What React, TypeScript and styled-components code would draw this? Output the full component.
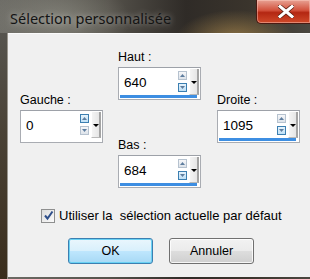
import React from 'react';
import styled, { createGlobalStyle } from 'styled-components';

const GlobalStyle = createGlobalStyle`
  html, body {
    margin: 0;
    padding: 0;
  }
  body {
    width: 310px;
    height: 279px;
    overflow: hidden;
    background: #2a241c;
  }
`;

const Window = styled.div`
  width: 310px;
  height: 279px;
  display: flex;
  flex-direction: column;
  overflow: hidden;
  background:
    radial-gradient(ellipse 60px 30px at 235px 40px, rgba(214, 170, 90, 0.55), rgba(214, 170, 90, 0) 100%),
    radial-gradient(ellipse 70px 40px at 60px 20px, rgba(150, 150, 140, 0.6), rgba(150, 150, 140, 0) 100%),
    linear-gradient(90deg, #6e6d67 0%, #55524b 35%, #2f2b27 60%, #3a342c 80%, #4a4740 100%);
  font-family: 'Liberation Sans', Arial, sans-serif;
`;

const TitleBar = styled.div`
  height: 33px;
  display: flex;
  align-items: flex-start;
`;

const Title = styled.div`
  padding: 9px 0 0 10px;
  font-family: 'Noto Sans', 'Open Sans', sans-serif;
  font-size: 14.5px;
  line-height: 18px;
  color: #141414;
  text-shadow: 0 0 6px rgba(255, 255, 255, 0.55);
`;

const CloseButton = styled.div`
  margin-left: auto;
  width: 54px;
  height: 24px;
  box-sizing: border-box;
  border: 1px solid #4a1a12;
  border-top: none;
  border-right: none;
  border-bottom-left-radius: 5px;
  background: linear-gradient(180deg, #e8a294 0%, #d2513c 45%, #b42712 55%, #cf4a2a 100%);
  box-shadow: inset 0 0 0 1px rgba(255, 210, 200, 0.45);
  display: flex;
  align-items: center;
  justify-content: center;
  padding-left: 4px;
`;

const Body = styled.div`
  flex: 1;
  display: flex;
`;

const LeftFrame = styled.div`
  width: 8px;
  background: linear-gradient(180deg, #56544e 0%, #4a4236 40%, #3a2d1c 100%);
  border-right: 1px solid #9a968e;
  box-sizing: border-box;
`;

const Client = styled.div`
  flex: 1;
  height: 244px;
  box-sizing: border-box;
  background: #f0f0f0;
  border-top: 1px solid #fbfbfb;
  display: flex;
  flex-direction: column;
`;

const Fields = styled.div`
  display: flex;
  padding-left: 12px;
  gap: 15px;
`;

const Column = styled.div<{ $top: number; $shift?: number }>`
  display: flex;
  flex-direction: column;
  width: 83px;
  padding-top: ${(p) => p.$top}px;
  margin-left: ${(p) => p.$shift ?? 0}px;
`;

const Label = styled.div<{ $gap?: number; $size?: number }>`
  font-size: ${(p) => p.$size ?? 12.5}px;
  line-height: 15px;
  color: #000;
  white-space: pre;
  margin-top: ${(p) => p.$gap ?? 0}px;
`;

const Spin = styled.div`
  margin-top: 2px;
  height: 33px;
  box-sizing: border-box;
  border: 1px solid #a9acb2;
  border-top-color: #9da1a8;
  background: #fff;
  display: flex;
  flex-direction: column;
`;

const SpinRow = styled.div`
  flex: 1;
  display: flex;
  align-items: stretch;
`;

const Value = styled.div`
  flex: 1;
  display: flex;
  align-items: center;
  padding-left: 5px;
  padding-top: 1px;
  font-size: 13.5px;
  color: #000;
`;

const Arrows = styled.div`
  width: 9px;
  display: flex;
  flex-direction: column;
  justify-content: center;
  gap: 3px;
  margin-right: 2px;
`;

const ArrowBox = styled.div<{ $hot?: boolean }>`
  width: 9px;
  height: 9px;
  box-sizing: border-box;
  border: 1px solid ${(p) => (p.$hot ? '#3c7fb1' : '#b6c2cf')};
  background: ${(p) => (p.$hot ? 'linear-gradient(180deg, #e6f3fc, #bfe0f6)' : 'linear-gradient(180deg, #f6f7f9, #dde3ea)')};
  display: flex;
  align-items: center;
  justify-content: center;
`;

const Drop = styled.div`
  width: 10px;
  margin: 1px 1px 0 0;
  box-sizing: border-box;
  border-left: 1px solid #ffffff;
  border-right: 2px solid #a4a4a4;
  border-bottom: 1px solid #b9b9b9;
  background: linear-gradient(90deg, #f4f4f4, #e6e6e6);
  display: flex;
  justify-content: center;
  padding-top: 12px;
`;

const Caret = styled.div`
  width: 0;
  height: 0;
  border-left: 3px solid transparent;
  border-right: 3px solid transparent;
  border-top: 3px solid #000;
`;

const Bar = styled.div<{ $on: boolean }>`
  height: 3px;
  margin: 0 3px 1px 1px;
  background: ${(p) => (p.$on ? '#3d8ee2' : 'transparent')};
`;

const CheckRow = styled.div`
  display: flex;
  align-items: center;
  gap: 4px;
  margin-top: 20px;
  padding-left: 33px;
`;

const CheckBox = styled.div`
  width: 14px;
  height: 14px;
  box-sizing: border-box;
  border: 1px solid #8e8f8f;
  background: linear-gradient(135deg, #dcdcdc, #fbfbfb);
  display: flex;
  align-items: center;
  justify-content: center;
`;

const Buttons = styled.div`
  display: flex;
  gap: 16px;
  margin-top: 15px;
  padding-left: 60px;
`;

const Button = styled.div<{ $primary?: boolean }>`
  width: 85px;
  height: 26px;
  box-sizing: border-box;
  border: 1px solid ${(p) => (p.$primary ? '#3c7fb1' : '#707070')};
  border-radius: 3px;
  background: ${(p) =>
    p.$primary
      ? 'linear-gradient(180deg, #eaf6fd 0%, #d9f0fc 48%, #bee6fd 52%, #a7d9f5 100%)'
      : 'linear-gradient(180deg, #f2f2f2 0%, #ebebeb 48%, #dddddd 52%, #cfcfcf 100%)'};
  box-shadow: inset 0 0 0 1px ${(p) => (p.$primary ? '#6ad2f4' : 'rgba(255,255,255,0.8)')};
  display: flex;
  align-items: center;
  justify-content: center;
  font-size: 12.5px;
  color: #000;
`;

const UpTri = () => (
  <svg width="5" height="3" viewBox="0 0 5 3">
    <polygon points="2.5,0 5,3 0,3" fill="#5e7d9e" />
  </svg>
);

const DownTri = () => (
  <svg width="5" height="3" viewBox="0 0 5 3">
    <polygon points="0,0 5,0 2.5,3" fill="#5e7d9e" />
  </svg>
);

interface SpinBoxProps {
  value: string;
  focused?: boolean;
  hot: 'up' | 'down';
}

const SpinBox = ({ value, focused, hot }: SpinBoxProps) => (
  <Spin>
    <SpinRow>
      <Value>{value}</Value>
      <Arrows>
        <ArrowBox $hot={hot === 'up'}><UpTri /></ArrowBox>
        <ArrowBox $hot={hot === 'down'}><DownTri /></ArrowBox>
      </Arrows>
      <Drop><Caret /></Drop>
    </SpinRow>
    <Bar $on={!!focused} />
  </Spin>
);

const App = () => (
  <Window>
    <GlobalStyle />
    <TitleBar>
      <Title>Sélection personnalisée</Title>
      <CloseButton>
        <svg width="16" height="13" viewBox="0 0 16 13">
          <path d="M2 1.5 L14 11.5 M14 1.5 L2 11.5" stroke="#5a1d10" strokeWidth="4.5" strokeLinecap="square" />
          <path d="M2 1.5 L14 11.5 M14 1.5 L2 11.5" stroke="#ffffff" strokeWidth="3" strokeLinecap="square" />
        </svg>
      </CloseButton>
    </TitleBar>
    <Body>
      <LeftFrame />
      <Client>
        <Fields>
          <Column $top={59}>
            <Label>Gauche :</Label>
            <SpinBox value="0" hot="up" />
          </Column>
          <Column $top={16}>
            <Label>Haut :</Label>
            <SpinBox value="640" focused hot="down" />
            <Label $gap={38}>Bas :</Label>
            <SpinBox value="684" focused hot="down" />
          </Column>
          <Column $top={59} $shift={1}>
            <Label>Droite :</Label>
            <SpinBox value="1095" focused hot="down" />
          </Column>
        </Fields>
        <CheckRow>
          <CheckBox>
            <svg width="11" height="11" viewBox="0 0 11 11">
              <path d="M2 5.5 L4.5 8.5 L9.5 1.5" fill="none" stroke="#2f4f8a" strokeWidth="2" />
            </svg>
          </CheckBox>
          <Label $size={13}>Utiliser la  sélection actuelle par défaut</Label>
        </CheckRow>
        <Buttons>
          <Button $primary>OK</Button>
          <Button>Annuler</Button>
        </Buttons>
      </Client>
    </Body>
  </Window>
);

export default App;
